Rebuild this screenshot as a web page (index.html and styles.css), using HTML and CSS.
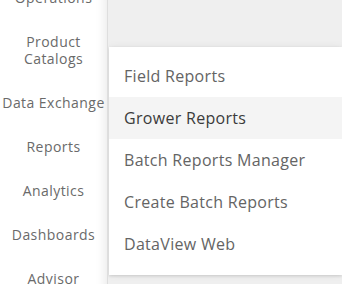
FILE: index.html
```html
<!DOCTYPE html>
<html lang="en">
<head>
    <meta charset="UTF-8">
    <meta name="viewport" content="width=device-width, initial-scale=1.0">
    <title>Reports Menu</title>
    <link rel="stylesheet" href="styles.css">
</head>
<body>
    <div class="app">
        <nav class="sidebar">
            <ul class="nav-list">
                <li>Operations</li>
                <li>Product<br>Catalogs</li>
                <li>Data Exchange</li>
                <li>Reports</li>
                <li>Analytics</li>
                <li>Dashboards</li>
                <li>Advisor</li>
            </ul>
        </nav>

        <main class="content">
            <ul class="dropdown">
                <li>Field Reports</li>
                <li class="active">Grower Reports</li>
                <li>Batch Reports Manager</li>
                <li>Create Batch Reports</li>
                <li>DataView Web</li>
            </ul>
        </main>
    </div>
</body>
</html>
```

FILE: styles.css
```css
* {
    margin: 0;
    padding: 0;
    box-sizing: border-box;
}

body {
    font-family: 'Open Sans', 'Liberation Sans', sans-serif;
    background: #efefef;
    overflow: hidden;
}

ul {
    list-style: none;
}

.app {
    display: flex;
    height: 284px;
}

.sidebar {
    width: 108px;
    flex-shrink: 0;
    background: #fff;
    border-right: 1px solid #dedede;
    box-shadow: inset -12px 0 10px -9px rgba(0, 0, 0, 0.08);
    overflow: hidden;
}

.nav-list {
    margin-top: -25px;
}

.nav-list li {
    padding: 13.5px 0;
    text-align: center;
    font-size: 14px;
    line-height: 17px;
    letter-spacing: 0.45px;
    color: #6a6a6a;
    white-space: nowrap;
}

.content {
    flex: 1;
    padding: 47px 0 0 1px;
    overflow: hidden;
}

.dropdown {
    background: #fff;
    padding: 8px 0 10px;
    box-shadow: 0 1px 3px rgba(0, 0, 0, 0.14), 0 0 8px rgba(0, 0, 0, 0.06);
}

.dropdown li {
    height: 42px;
    line-height: 42px;
    padding-left: 15px;
    font-size: 16px;
    letter-spacing: 0.3px;
    color: #646464;
    white-space: nowrap;
}

.dropdown li.active {
    background: #f4f4f4;
    color: #3b3b3b;
}
```
